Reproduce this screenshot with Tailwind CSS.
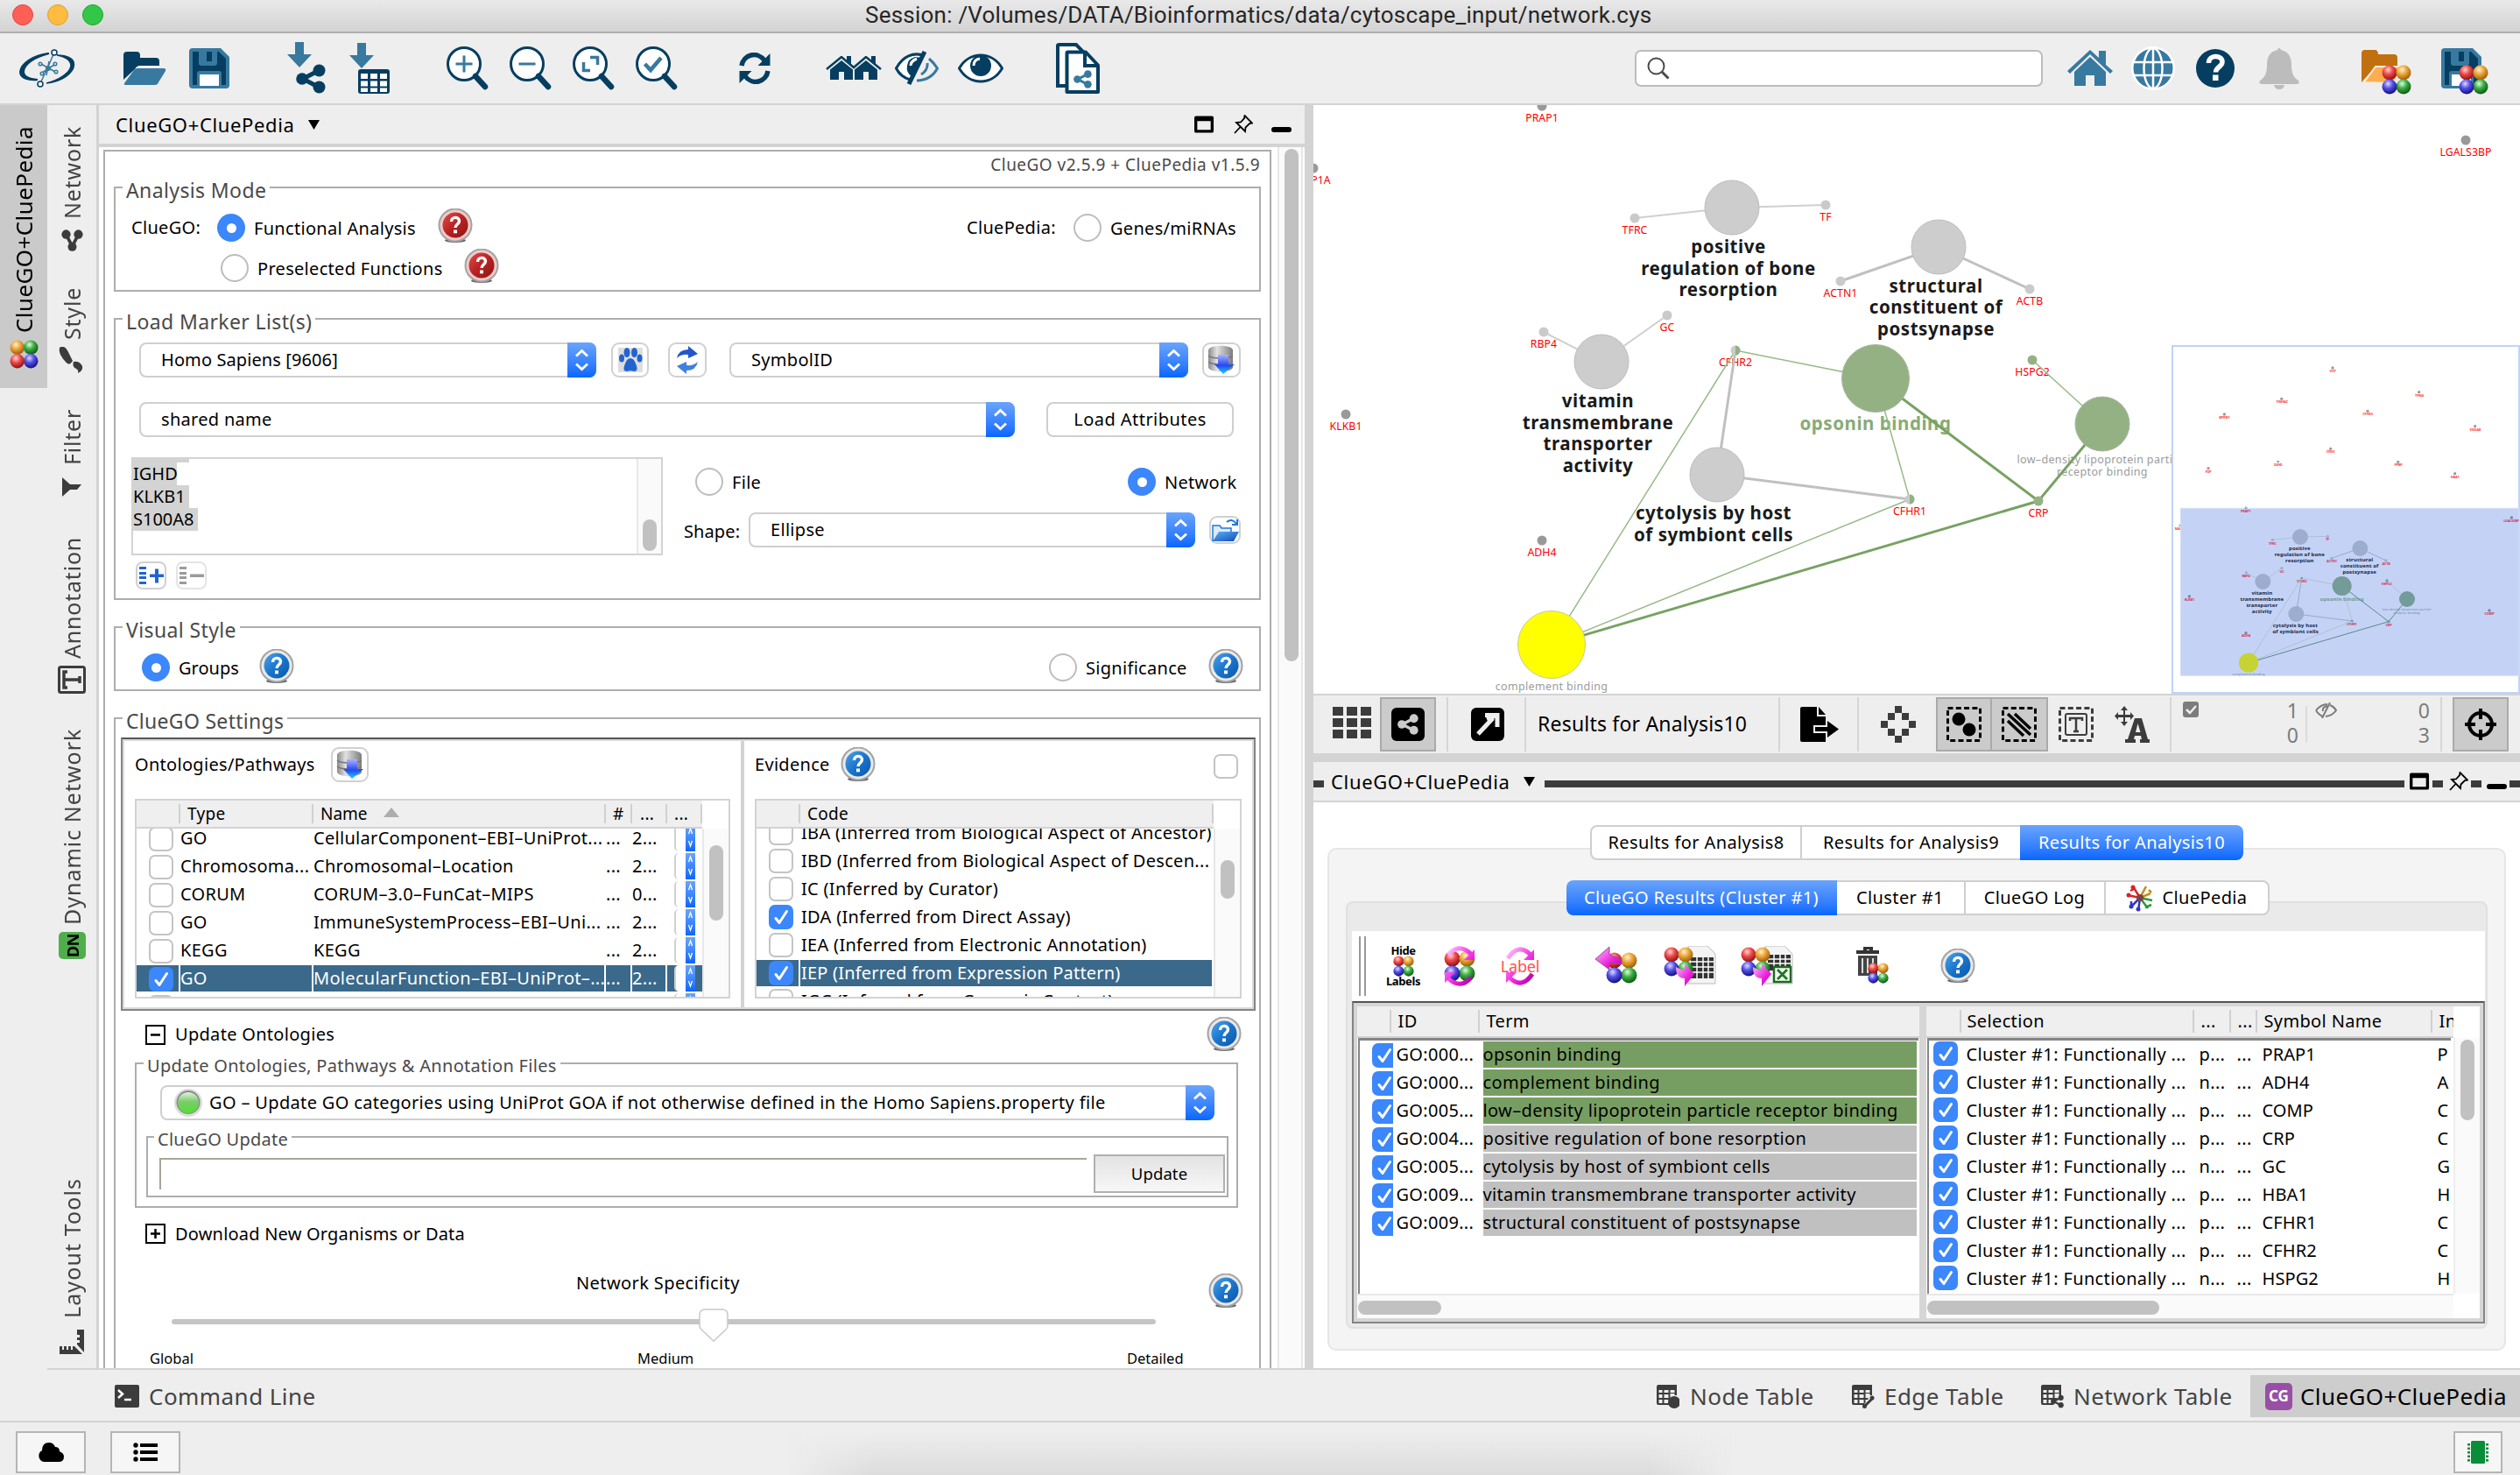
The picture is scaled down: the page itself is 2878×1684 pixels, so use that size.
<!DOCTYPE html>
<html lang="en">
<head>
<meta charset="utf-8">
<title>Session: network.cys</title>
<script src="https://cdn.jsdelivr.net/npm/@tailwindcss/browser@4"></script>
</head>
<body class="relative flex h-[1684px] w-[2878px] flex-col overflow-hidden whitespace-nowrap bg-[#eeeeee] font-['Noto_Sans',sans-serif] text-[20px] leading-[24px] tracking-[0.3px] text-black">

<!-- Shared icon symbols -->
<svg class="absolute size-0" aria-hidden="true">
  <defs>
    <radialGradient id="gR" cx=".4" cy=".3" r=".7"><stop offset="0" stop-color="#ffd5d0"/><stop offset=".45" stop-color="#ee4b4b"/><stop offset="1" stop-color="#8d1010"/></radialGradient>
    <radialGradient id="gO" cx=".4" cy=".3" r=".7"><stop offset="0" stop-color="#fff3d0"/><stop offset=".45" stop-color="#eda63a"/><stop offset="1" stop-color="#9a5c08"/></radialGradient>
    <radialGradient id="gB" cx=".4" cy=".3" r=".7"><stop offset="0" stop-color="#dcdcff"/><stop offset=".45" stop-color="#5550e8"/><stop offset="1" stop-color="#12107e"/></radialGradient>
    <radialGradient id="gG" cx=".4" cy=".3" r=".7"><stop offset="0" stop-color="#dcffdc"/><stop offset=".45" stop-color="#3fae45"/><stop offset="1" stop-color="#0a5a12"/></radialGradient>
    <linearGradient id="qR" x1="0" y1="0" x2="1" y2="1"><stop offset="0" stop-color="#dd4b4b"/><stop offset=".5" stop-color="#b92222"/><stop offset="1" stop-color="#8c1616"/></linearGradient>
    <linearGradient id="qB" x1="0" y1="0" x2="1" y2="1"><stop offset="0" stop-color="#4fa3e6"/><stop offset=".5" stop-color="#1a75cc"/><stop offset="1" stop-color="#0a57a8"/></linearGradient>
    <linearGradient id="gLed" x1="0" y1="0" x2="0" y2="1"><stop offset="0" stop-color="#dff3da"/><stop offset=".45" stop-color="#7ccc6c"/><stop offset="1" stop-color="#4fe02e"/></linearGradient>
    <linearGradient id="gDb" x1="0" y1="0" x2="1" y2="0"><stop offset="0" stop-color="#8a8a8a"/><stop offset=".35" stop-color="#e2e2e2"/><stop offset="1" stop-color="#7c7c7c"/></linearGradient>
    <linearGradient id="gArr" x1="0" y1="0" x2="0" y2="1"><stop offset="0" stop-color="#a9b4ff"/><stop offset=".55" stop-color="#2747f0"/><stop offset="1" stop-color="#17d2ff"/></linearGradient>
    <linearGradient id="gFold" x1="0" y1="0" x2="1" y2="1"><stop offset="0" stop-color="#5fb0f5"/><stop offset="1" stop-color="#0b4cb8"/></linearGradient>
    <linearGradient id="gMag" x1="0" y1="0" x2="1" y2="1"><stop offset="0" stop-color="#ffc4ff"/><stop offset=".6" stop-color="#ee22dd"/><stop offset="1" stop-color="#b000a8"/></linearGradient>
  </defs>
  <symbol id="balls" viewBox="0 0 32 32"><circle cx="8.5" cy="8.5" r="8" fill="url(#gR)"/><circle cx="23.5" cy="8.5" r="8" fill="url(#gO)"/><circle cx="23.5" cy="23.5" r="8" fill="url(#gG)"/><circle cx="8.5" cy="23.5" r="8" fill="url(#gB)"/></symbol>
  <symbol id="ballsv" viewBox="0 0 32 32"><circle cx="8.5" cy="8.5" r="8" fill="url(#gO)"/><circle cx="23.5" cy="8.5" r="8" fill="url(#gG)"/><circle cx="23.5" cy="23.5" r="8" fill="url(#gB)"/><circle cx="8.5" cy="23.5" r="8" fill="url(#gR)"/></symbol>
  <symbol id="helpR" viewBox="0 0 40 40"><ellipse cx="20" cy="36.5" rx="12" ry="2.5" fill="#666"/><circle cx="20" cy="19" r="18.5" fill="#f0c9c9" stroke="#a3a3a3" stroke-width="2"/><circle cx="20" cy="19" r="14.5" fill="url(#qR)"/><path d="M15.5 15c0-6 9-6 9-.7 0 3.700-4.500 3.700-4.500 7.700" fill="none" stroke="#fff" stroke-width="3.400"/><rect x="18" y="24.500" width="4" height="3.800" fill="#fff"/></symbol>
  <symbol id="helpB" viewBox="0 0 40 40"><ellipse cx="20" cy="36.500" rx="12" ry="2.500" fill="#666"/><circle cx="20" cy="19" r="18.500" fill="#e9e9e9" stroke="#a3a3a3" stroke-width="2"/><circle cx="20" cy="19" r="14.500" fill="url(#qB)"/><path d="M15.500 15c0-6 9-6 9-.7 0 3.700-4.500 3.700-4.500 7.700" fill="none" stroke="#fff" stroke-width="3.400"/><rect x="18" y="24.500" width="4" height="3.800" fill="#fff"/></symbol>
  <symbol id="updown" viewBox="0 0 33 40"><path d="M10 15.500 16.500 9.500 23 15.500M10 24.500 16.500 30.500 23 24.500" fill="none" stroke="#fff" stroke-width="2.800"/></symbol>
  <symbol id="db" viewBox="0 0 34 34"><path d="M2 6c0-7 28-7 28 0v19c0 7-28 7-28 0z" fill="url(#gDb)"/><path d="M2 12c4 4 24 4 28 0M2 19c4 4 24 4 28 0" fill="none" stroke="#777" stroke-width="1.500"/><path d="M13 11h12v11h7L19 33 9 22h4z" fill="url(#gArr)"/></symbol>
  <symbol id="check" viewBox="0 0 28 28"><path d="M8 15.500 12 20.500 20.500 7.500" fill="none" stroke="#fff" stroke-width="3" stroke-linecap="round" stroke-linejoin="round"/></symbol>
  <symbol id="maxi" viewBox="0 0 24 20"><path fill-rule="evenodd" d="M2 0h19q2 0 2 2v16q0 2-2 2H2q-2 0-2-2V2q0-2 2-2zM3.500 6v10.500h16V6z"/></symbol>
  <symbol id="pin" viewBox="0 0 22 22"><path d="M12.500 1 21 9.500 18 10 13.500 14.500 13 19 3 9 8 8.500 12 4zM7.500 14 1 21" fill="none" stroke="#000" stroke-width="1.800"/></symbol>
  <symbol id="mag" viewBox="0 0 48 50"><circle cx="20" cy="20" r="18.500" fill="#fff" stroke="#053e60" stroke-width="3"/><path d="M33 34 44 46" stroke="#053e60" stroke-width="6.500" stroke-linecap="round"/></symbol>
  <symbol id="share" viewBox="0 0 34 34"><circle cx="7" cy="17" r="6.800"/><circle cx="26.500" cy="7.500" r="7"/><circle cx="26.500" cy="26.500" r="7"/><path d="M26 7.500 8 17 26 26.500" fill="none" stroke="currentColor" stroke-width="5"/></symbol>
  <symbol id="tbl" viewBox="0 0 26 27"><path fill-rule="evenodd" d="M2 0h21v12h-2.500V10h-5v5h3v2h-3v4h-1v2H2q-2 0-2-2V2q0-2 2-2zM2.500 6v3h4V6zM8.500 6v3h5V6zM15.500 6v3h5V6zM2.500 11v4h4v-4zM8.500 11v4h5v-4zM2.500 17v4h4v-4zM8.500 17v4h5v-4z"/></symbol>
  <symbol id="down" viewBox="0 0 28 29"><path d="M9 0h10v14h9L14 29 0 14h9z" fill="#38799f"/></symbol>
  <symbol id="floppy" viewBox="0 0 46 46"><path d="M4 0h32l10 10v32q0 4-4 4H4q-4 0-4-4V4q0-4 4-4z" fill="#38799f"/><path d="M4 4h7v13q0 3 3 3h15q3 0 3-3V4h2l8 8v30H37V29q0-3-3-3H12q-3 0-3 3v13H4z" fill="#053e60"/><rect x="20" y="4" width="6" height="11" fill="#053e60"/><rect x="12" y="30" width="22" height="13" fill="#fff"/></symbol>
</svg>

<!-- Title bar -->
<header class="flex h-[38px] shrink-0 items-center border-b-2 border-[#b0b0b0] bg-linear-to-b from-[#e9e9e9] to-[#d3d3d3] pb-[3px]">
  <i class="ml-[14px] size-[24px] rounded-full border border-[#e2463f] bg-[#ff5f57]"></i>
  <i class="ml-[16px] size-[24px] rounded-full border border-[#e0a02e] bg-[#febc40]"></i>
  <i class="ml-[16px] size-[24px] rounded-full border border-[#1daa2e] bg-[#33c748]"></i>
  <span class="ml-[870px] font-['Roboto',sans-serif] text-[26px] tracking-[0.23px] text-[#262626]">Session: /Volumes/DATA/Bioinformatics/data/cytoscape_input/network.cys</span>
</header>

<!-- Main toolbar -->
<nav class="flex h-[82px] shrink-0 items-center border-b-2 border-[#d3d3d3]">
  <svg class="ml-[22px] h-[44px] w-[64px]" viewBox="0 0 64 44" fill="none"><path d="M34 5C15 7 2 17 1 26c0 7 9 10 20 9M34 5C18 9 5 17 5 26c0 5 6 8 16 9" fill="#053e60" fill-rule="evenodd" stroke="#053e60" stroke-width="2"/><path d="M43 7c12 0 20 4 19.500 11C62 28 48 37 31 39 46 35 58 27 59 19c0-7-6-10-16-12z" fill="#053e60" stroke="#053e60" stroke-width="1.500"/><path d="M39 6 33 20 25 37M25 17l16 9M34 14l-3 16M26 27l14-9" stroke="#38799f" stroke-width="1.500"/><g stroke="#053e60" stroke-width="1.500" fill="#fff"><circle cx="40" cy="4" r="3"/><circle cx="24" cy="40" r="3"/></g><g fill="#eee" stroke="#38799f" stroke-width="1.500"><circle cx="24" cy="17" r="1.800"/><circle cx="42" cy="26" r="1.800"/><circle cx="26" cy="28" r="1.800"/><circle cx="41" cy="17" r="1.800"/></g><circle cx="33" cy="22" r="3" fill="#38799f"/></svg>
  <svg class="ml-[54px] h-[38px] w-[50px]" viewBox="0 0 50 38"><path d="M1 32V4q0-4 4-4h11q4 0 4 4v3h18q4 0 4 4v5H20q-4 0-6 4z" fill="#053e60"/><path d="M2 36 13 21q1-2 4-2h30q3 0 2 3l-8 13q-1 3-4 3H4q-3 0-2-2z" fill="#38799f"/></svg>
  <svg class="ml-[26px] size-[46px]"><use href="#floppy"/></svg>
  <svg class="ml-[66px] h-[60px] w-[44px]" viewBox="0 0 44 60"><use href="#down" width="28" height="29"/><use href="#share" x="10" y="25" width="34" height="34" class="fill-[#053e60] text-[#053e60]"/></svg>
  <svg class="ml-[27px] h-[60px] w-[46px]" viewBox="0 0 46 60"><use href="#down" width="28" height="29" y="1"/><rect x="10" y="31" width="36" height="28" rx="3" fill="#053e60"/><path d="M13 36h8v6h-8zM24 36h8v6h-8zM35 36h8v6h-8zM13 44.500h8v6h-8zM24 44.500h8v6h-8zM35 44.500h8v6h-8zM13 52.500h8v4.500h-8zM24 52.500h8v4.500h-8zM35 52.500h8v4.500h-8z" fill="#fff"/></svg>
  <svg class="ml-[65px] h-[50px] w-[48px]"><use href="#mag"/><path d="M20 10.500v19M10.500 20h19" stroke="#38799f" stroke-width="3"/></svg>
  <svg class="ml-[24px] h-[50px] w-[48px]"><use href="#mag"/><path d="M10.500 20h19" stroke="#38799f" stroke-width="3"/></svg>
  <svg class="ml-[24px] h-[50px] w-[48px]"><use href="#mag"/><path d="M20 12.500h8.500V21M12.500 18v9.500H20" fill="none" stroke="#38799f" stroke-width="3.500"/></svg>
  <svg class="ml-[24px] h-[50px] w-[48px]"><use href="#mag"/><path d="M10.500 20 17 27 29 13" fill="none" stroke="#38799f" stroke-width="4.500"/></svg>
  <svg class="ml-[70px] h-[36px] w-[36px]" viewBox="0 0 36 36"><path d="M3 15C5 2 21-2 29 9M33 21C31 34 15 38 7 27" fill="none" stroke="#053e60" stroke-width="5.500"/><path d="M35.500 1v14h-14zM.5 35V21h14z" fill="#053e60"/></svg>
  <svg class="ml-[63px] h-[28px] w-[64px]" viewBox="0 0 64 28" fill="#053e60"><path d="M1 15 18 1 32 13 46 1 63 15" fill="none" stroke="#053e60" stroke-width="2.500"/><path d="M24 0h5v9l-5-4zM52 0h5v9l-5-4zM5 15.500 18 5 31 15.500V27H21v-9h-6v9H5zM33 15.500 46 5 59 15.500V27H49v-9h-6v9H33z"/></svg>
  <svg class="ml-[15px] h-[40px] w-[50px]" viewBox="0 0 50 40" fill="none"><path d="M1.500 20C9 6 24 3 33 6L18 34C10 32 5 27 1.500 20z" fill="#fff"/><path d="M34 5.500C21 1 9 6 1.500 20c3 6 9 11 16 13" stroke="#053e60" stroke-width="3"/><path d="M39 9q6 5 9.500 11C44 29 35 34 25 34M37 14q1 8-7 13" stroke="#38799f" stroke-width="3"/><path d="M31 8 19 29a12 12 0 0 1-5-12q1-8 9-10z" fill="#053e60"/><path d="M18 17q0-5 7-8" stroke="#fff" stroke-width="3"/><path d="M34 1 16 38" stroke="#053e60" stroke-width="5"/></svg>
  <svg class="ml-[22px] h-[34px] w-[52px]" viewBox="0 0 52 34" fill="none"><path d="M1.500 17C13-3 39-3 50.500 17 39 37 13 37 1.500 17z" fill="#fff" stroke="#053e60" stroke-width="3"/><circle cx="26" cy="14" r="12" fill="#053e60"/><path d="M18 14q0-7 7-8" stroke="#fff" stroke-width="3"/></svg>
  <svg class="ml-[60px] h-[58px] w-[50px]" viewBox="0 0 50 58" fill="none"><path d="M2 3q0-1 2-1h19l9 9v38H2z" fill="#fff" stroke="#053e60" stroke-width="4"/><path d="M12.500 11.500q0-1 1-1H34l14 15V56H12.500z" fill="#fff" stroke="#053e60" stroke-width="4" stroke-linejoin="round"/><path d="M33 10v16h15" stroke="#053e60" stroke-width="4"/><use href="#share" x="20" y="31" width="21" height="21" class="fill-[#38799f] text-[#38799f]"/></svg>
  <div class="ml-[611px] flex h-[42px] w-[466px] items-center rounded-[7px] border-2 border-[#bcbcbc] bg-white pl-[12px]">
    <svg class="size-[26px]" viewBox="0 0 26 26" fill="none" stroke="#4a4a4a"><circle cx="10.500" cy="10.500" r="9" stroke-width="2"/><path d="M17 17 24.500 24.500" stroke-width="3"/></svg>
  </div>
  <svg class="ml-[28px] h-[42px] w-[52px]" viewBox="0 0 52 42" fill="#38799f"><path d="M26 0 36 9V1h8v16l8 7-3 3L26 5 3 27 0 24z"/><path d="M26 8 44 25v16H31V29H21v12H8V25z"/></svg>
  <svg class="ml-[20px] size-[52px]" viewBox="0 0 52 52" fill="none"><circle cx="26" cy="26" r="25" fill="#fff"/><circle cx="26" cy="26" r="22.500" fill="#38799f"/><path d="M26 2v48M2 19h48M2 34h48" stroke="#fff" stroke-width="2.500"/><ellipse cx="26" cy="26" rx="10.500" ry="23" stroke="#fff" stroke-width="2.500"/></svg>
  <svg class="ml-[23px] size-[44px]" viewBox="0 0 44 44"><circle cx="22" cy="22" r="22" fill="#053e60"/><path d="M14.500 16c0-10 15.500-9.500 15.500-1.500 0 6-7.500 6-7.500 12" fill="none" stroke="#fff" stroke-width="5.500"/><rect x="19" y="29.500" width="6.500" height="6.500" fill="#fff"/></svg>
  <svg class="ml-[28px] h-[48px] w-[46px]" viewBox="0 0 46 48" fill="#bcbcbc"><path d="M21 3q2-5 4 0c9 2 12 8 12 18 0 9 3 14 8 17q2 4-3 4H4q-5 0-3-4c5-3 8-8 8-17C9 11 12 5 21 3z"/><path d="M17 43h12q-1 5-6 5t-6-5z"/></svg>
  <svg class="mt-[10px] ml-[71px] h-[54px] w-[60px]" viewBox="0 0 60 54"><path d="M0 38V5q0-4 4-4h11q4 0 4 5h18q4 0 4 4v10H16z" fill="#c1700f"/><path d="M3 38 16 20h32L36 39z" fill="#ffad50" stroke="#f6ead8" stroke-width="2"/><use href="#balls" x="23" y="18" width="34" height="34"/></svg>
  <svg class="mt-[8px] ml-[31px] h-[54px] w-[54px]" viewBox="0 0 54 54"><use href="#floppy" width="46" height="46"/><use href="#balls" x="20" y="19" width="34" height="34"/></svg>
</nav>

<!-- Work area -->
<div class="flex h-[1444px] shrink-0">

  <!-- Vertical tab strips -->
  <div class="w-[54px] shrink-0">
    <div class="flex h-[323px] flex-col items-center bg-[#cacaca] pt-[24px]">
      <span class="h-[236px] rotate-180 text-[26px] leading-[30px] tracking-[0.4px] [writing-mode:vertical-rl]">ClueGO+CluePedia</span>
      <svg class="mt-[8px] size-[33px]"><use href="#ballsv"/></svg>
    </div>
  </div>
  <div class="flex w-[56px] shrink-0 flex-col items-center border-b-2 border-[#d3d3d3] text-[25px] leading-[30px] tracking-[0.8px] text-[#444]">
    <span class="mt-[26px] h-[104px] rotate-180 [writing-mode:vertical-rl]">Network</span>
    <svg class="mt-[12px] size-[25px] -rotate-90 fill-[#3c3c3c] text-[#3c3c3c]"><use href="#share"/></svg>
    <span class="mt-[42px] h-[59px] rotate-180 [writing-mode:vertical-rl]">Style</span>
    <svg class="mt-[8px] size-[30px]" viewBox="0 0 30 30" fill="#3c3c3c"><path d="M2 0q5-2 9 6l5 10q-3 5-6 3C4 14-2 4 2 0zM17 17q7-1 10 5 1 5-5 8 1-4-2-5-5-2-3-8z"/></svg>
    <span class="mt-[41px] h-[64px] rotate-180 [writing-mode:vertical-rl]">Filter</span>
    <svg class="mt-[14px] size-[22px]" viewBox="0 0 22 22" fill="#3c3c3c"><path d="M0 0 9 8h13l-5 6H9L0 22z"/></svg>
    <span class="mt-[45px] h-[140px] rotate-180 [writing-mode:vertical-rl]">Annotation</span>
    <svg class="mt-[8px] size-[32px]" viewBox="0 0 32 32" fill="none" stroke="#3c3c3c"><rect x="1.500" y="1.500" width="29" height="29" rx="2" stroke-width="3"/><path d="M11 7H7v18h4M7 16h18M25 12v8" stroke-width="3.500"/></svg>
    <span class="mt-[39px] h-[225px] rotate-180 tracking-[1px] [writing-mode:vertical-rl]">Dynamic Network</span>
    <span class="mt-[8px] flex size-[31px] rotate-180 items-center justify-center rounded-[5px] bg-[#4fae4b] text-[18px] font-bold leading-[18px] tracking-[-0.5px] text-black [writing-mode:vertical-rl]">DN</span>
    <span class="mt-[250px] h-[160px] rotate-180 tracking-[1.1px] [writing-mode:vertical-rl]">Layout Tools</span>
    <svg class="mt-[13px] size-[28px]" viewBox="0 0 28 28" fill="#3c3c3c"><path d="M20 0h8v26L20 17v-2h3v-3h-3V9h3V6h-3zM0 28V19h3v4h2v-4h3v4h2v-4h3v4h2v-4h2l9 9z"/></svg>
  </div>

  <!-- Control panel -->
  <section class="flex w-[1380px] shrink-0 flex-col border-b-2 border-l-[3px] border-[#d3d3d3]">
    <div class="flex h-[48px] shrink-0 items-center border-b-4 border-[#d3d3d3] pl-[19px]">
      <span class="w-[220px] text-[22px] tracking-[0.65px]">ClueGO+CluePedia</span>
      <svg class="h-[11px] w-[13px]" viewBox="0 0 13 11"><path d="M0 0h13L6.500 11z"/></svg>
      <svg class="ml-[999px] h-[20px] w-[23px]"><use href="#maxi"/></svg>
      <svg class="ml-[22px] size-[22px]"><use href="#pin"/></svg>
      <i class="mt-[11px] ml-[21px] h-[6px] w-[23px] rounded-[3px] bg-black"></i>
    </div>
    <div class="flex h-[1394px] overflow-hidden bg-white pl-[5px]">
      <div class="mt-[3px] w-[1334px] shrink-0 border-2 border-b-0 border-[#adadad]">
        <p class="h-[27px] pt-[2px] pr-[11px] text-right text-[19px] leading-[27px] tracking-[0.48px] text-[#4a4a4a]">ClueGO v2.5.9 + CluePedia v1.5.9</p>

        <!-- Analysis mode -->
        <fieldset class="ml-[10px] h-[133px] w-[1310px] border-2 border-[#adadad]">
          <legend class="ml-[8px] h-[28px] px-[4px] pt-[3px] text-[23px] leading-[28px] tracking-[0.38px] text-[#4a4a4a]">Analysis Mode</legend>
          <div class="flex h-[56px] items-center pt-[8px] pl-[18px]">
            <span class="w-[98px]">ClueGO:</span>
            <i class="flex size-[32px] items-center justify-center rounded-full bg-[#3b87fb]"><i class="size-[11px] rounded-full bg-white"></i></i>
            <span class="ml-[10px] w-[210px] pt-[2px]">Functional Analysis</span>
            <svg class="mb-[4px] size-[40px]"><use href="#helpR"/></svg>
            <span class="ml-[564px] w-[122px]">CluePedia:</span>
            <i class="size-[32px] rounded-full border-2 border-[#bdbdbd] bg-white"></i>
            <span class="ml-[10px] pt-[2px]">Genes/miRNAs</span>
          </div>
          <div class="flex h-[44px] items-center pl-[120px]">
            <i class="size-[32px] rounded-full border-2 border-[#bdbdbd] bg-white"></i>
            <span class="ml-[10px] w-[236px] pt-[2px]">Preselected Functions</span>
            <svg class="mb-[4px] size-[40px]"><use href="#helpR"/></svg>
          </div>
        </fieldset>

        <!-- Marker lists -->
        <fieldset class="mt-[17px] ml-[10px] h-[335px] w-[1310px] border-2 border-[#adadad]">
          <legend class="ml-[8px] h-[28px] px-[4px] pt-[3px] text-[23px] leading-[28px] tracking-[0.38px] text-[#4a4a4a]">Load Marker List(s)</legend>
          <div class="mt-[13px] flex h-[40px] items-center pl-[27px]">
            <div class="flex h-[40px] w-[522px] items-center justify-between rounded-[8px] border-2 border-[#cfcfcf] bg-white pl-[23px]"><span class="tracking-[0.1px]">Homo Sapiens [9606]</span><svg class="-mr-[2px] h-[40px] w-[33px] rounded-r-[8px] bg-linear-to-b from-[#6aa4fb] to-[#0366fe]"><use href="#updown"/></svg></div>
            <button class="ml-[17px] flex h-[40px] w-[43px] items-center justify-center rounded-[9px] border-2 border-[#d0d0d0] bg-white"><svg class="size-[28px] bg-[#dedede]" viewBox="0 0 28 28" fill="#2264cf"><ellipse cx="4" cy="12" rx="3" ry="4.500"/><ellipse cx="10" cy="5.500" rx="3.500" ry="5.500"/><ellipse cx="18.500" cy="5.500" rx="3.500" ry="5.500"/><ellipse cx="24.500" cy="12" rx="3" ry="4.500"/><path d="M14 12q4 0 6 6 4 9-2 9-4-1.500-8 0-6 0-2-9 2-6 6-6z"/></svg></button>
            <button class="ml-[22px] flex h-[40px] w-[44px] items-center justify-center rounded-[9px] border-2 border-[#d0d0d0] bg-white"><svg class="h-[32px] w-[26px]" viewBox="0 0 26 32"><path d="M1 14Q3 4 14 4V0l11 9-11 5v-4Q6 9 1 14z" fill="#2357c8"/><path d="M25 18q-2 10-13 10v4L1 23l11-5v4q8 1 13-4z" fill="#3f80e0"/></svg></button>
            <div class="ml-[26px] flex h-[40px] w-[524px] items-center justify-between rounded-[8px] border-2 border-[#cfcfcf] bg-white pl-[23px]"><span>SymbolID</span><svg class="-mr-[2px] h-[40px] w-[33px] rounded-r-[8px] bg-linear-to-b from-[#6aa4fb] to-[#0366fe]"><use href="#updown"/></svg></div>
            <button class="ml-[16px] flex h-[40px] w-[44px] items-center justify-center rounded-[9px] border-2 border-[#d0d0d0] bg-white"><svg class="size-[34px]"><use href="#db"/></svg></button>
          </div>
          <div class="mt-[28px] flex h-[40px] items-center pl-[27px]">
            <div class="flex h-[40px] w-[1000px] items-center justify-between rounded-[8px] border-2 border-[#cfcfcf] bg-white pl-[23px]"><span>shared name</span><svg class="-mr-[2px] h-[40px] w-[33px] rounded-r-[8px] bg-linear-to-b from-[#6aa4fb] to-[#0366fe]"><use href="#updown"/></svg></div>
            <button class="ml-[36px] h-[40px] w-[214px] rounded-[8px] border-2 border-[#cfcfcf] bg-white tracking-[0.45px]">Load Attributes</button>
          </div>
          <div class="mt-[23px] flex pl-[18px]">
            <div class="flex h-[112px] w-[607px] justify-between border-2 border-[#d3d3d3]">
              <div class="-mt-[2px] -ml-[2px] flex flex-col items-start tracking-[0px]">
                <i class="h-[6px] w-[66px] bg-[#d3d3d3]"></i>
                <span class="h-[26px] w-[52px] bg-[#d3d3d3] pl-[2px] leading-[26px]">IGHD</span>
                <span class="h-[26px] w-[66px] bg-[#d3d3d3] pl-[2px] leading-[26px]">KLKB1</span>
                <span class="h-[26px] w-[76px] bg-[#d3d3d3] pl-[2px] leading-[26px]">S100A8</span>
              </div>
              <div class="flex w-[28px] flex-col items-center justify-end border-l-2 border-[#e8e8e8] bg-[#fafafa] pb-[3px]"><i class="h-[36px] w-[16px] rounded-full bg-[#c1c1c1]"></i></div>
            </div>
            <div class="ml-[24px] pt-[12px]">
              <div class="flex h-[32px] items-center pl-[13px]">
                <i class="size-[32px] rounded-full border-2 border-[#bdbdbd] bg-white"></i>
                <span class="ml-[10px] w-[452px] pt-[2px]">File</span>
                <i class="flex size-[32px] items-center justify-center rounded-full bg-[#3b87fb]"><i class="size-[11px] rounded-full bg-white"></i></i>
                <span class="ml-[10px] pt-[2px]">Network</span>
              </div>
              <div class="mt-[19px] flex h-[40px] items-center">
                <span class="w-[74px] pt-[3px] tracking-[0.1px]">Shape:</span>
                <div class="flex h-[40px] w-[510px] items-center justify-between rounded-[8px] border-2 border-[#cfcfcf] bg-white pl-[23px]"><span>Ellipse</span><svg class="-mr-[2px] h-[40px] w-[33px] rounded-r-[8px] bg-linear-to-b from-[#6aa4fb] to-[#0366fe]"><use href="#updown"/></svg></div>
                <button class="ml-[16px] flex h-[32px] w-[36px] items-center justify-center rounded-[9px] border-2 border-[#d0d0d0] bg-white"><svg class="h-[27px] w-[31px]" viewBox="0 0 31 27"><path d="M1 26V8h8l2 3h11v5" fill="#dfe9f7" stroke="#1d78e0" stroke-width="1.500"/><path d="M1 26 8 15h23l-6 11z" fill="url(#gFold)"/><path d="M17 4q6-5 11 2M29 1v6h-6" fill="none" stroke="#1d78e0" stroke-width="2"/></svg></button>
              </div>
            </div>
          </div>
          <div class="mt-[7px] flex pl-[23px]">
            <button class="flex h-[32px] w-[35px] items-center justify-center rounded-[8px] border-2 border-[#d0d0d0] bg-white"><svg class="h-[20px] w-[28px]" viewBox="0 0 28 20" fill="#2264cf"><path d="M0 0h8v3H0zM0 6h8v3H0zM0 11h8v3H0zM0 17h8v3H0zM12 8.500h16v3.500H12zM18 2.500h4v16h-4z"/></svg></button>
            <button class="ml-[11px] flex h-[32px] w-[35px] items-center justify-center rounded-[8px] border-2 border-[#e4e4e4] bg-white"><svg class="h-[20px] w-[28px]" viewBox="0 0 28 20" fill="#9a9a9a"><path d="M0 0h8v3H0zM0 6h8v3H0zM0 11h8v3H0zM0 17h8v3H0zM12 8.500h16v3.500H12z"/></svg></button>
          </div>
        </fieldset>

        <!-- Visual style -->
        <fieldset class="mt-[17px] ml-[10px] h-[87px] w-[1310px] border-2 border-[#adadad]">
          <legend class="ml-[8px] h-[28px] px-[4px] pt-[3px] text-[23px] leading-[28px] tracking-[0.38px] text-[#4a4a4a]">Visual Style</legend>
          <div class="mt-[12px] flex h-[40px] items-center pl-[30px]">
            <i class="flex size-[32px] items-center justify-center rounded-full bg-[#3b87fb]"><i class="size-[11px] rounded-full bg-white"></i></i>
            <span class="ml-[10px] w-[92px] pt-[2px] tracking-[0px]">Groups</span>
            <svg class="mb-[3px] size-[40px]"><use href="#helpB"/></svg>
            <i class="ml-[862px] size-[32px] rounded-full border-2 border-[#bdbdbd] bg-white"></i>
            <span class="ml-[10px] w-[140px] pt-[2px]">Significance</span>
            <svg class="mb-[3px] size-[40px]"><use href="#helpB"/></svg>
          </div>
        </fieldset>

        <!-- ClueGO settings -->
        <fieldset class="mt-[17px] ml-[10px] h-[800px] w-[1310px] border-2 border-[#adadad]">
          <legend class="ml-[8px] h-[28px] px-[4px] pt-[3px] text-[23px] leading-[28px] tracking-[0.3px] text-[#4a4a4a]">ClueGO Settings</legend>
          <div class="mt-[8px] ml-[6px] h-[312px] w-[1296px] border-2 border-[#858585] border-t-[#555]">
            <div class="flex h-full border-2 border-[#dadada]">
              <div class="w-[704px] shrink-0 pl-[12px]">
                <div class="mt-[7px] flex h-[40px] items-center">
                  <span class="w-[224px]">Ontologies/Pathways</span>
                  <button class="flex h-[40px] w-[43px] items-center justify-center rounded-[9px] border-2 border-[#d0d0d0] bg-white"><svg class="size-[34px]"><use href="#db"/></svg></button>
                </div>
                <div class="mt-[19px] flex h-[228px] w-[680px] border-2 border-[#d3d3d3]">
                  <div class="w-[646px] shrink-0">
                    <div class="grid h-[32px] grid-cols-[50px_152px_334px_30px_40px_40px] items-center border-b-2 border-[#d3d3d3] bg-[#efefef] text-[19px]">
                      <span class="h-[22px] border-r-2 border-[#d0d0d0]"></span>
                      <span class="h-[22px] border-r-2 border-[#d0d0d0] pl-[8px] leading-[22px]">Type</span>
                      <span class="flex h-[22px] items-center border-r-2 border-[#d0d0d0] pl-[8px] leading-[22px] tracking-[0px]">Name<svg class="mb-[3px] ml-[18px] h-[11px] w-[18px]" viewBox="0 0 18 11"><path d="M9 0 18 11H0z" fill="#adadad"/></svg></span>
                      <span class="h-[22px] border-r-2 border-[#d0d0d0] pl-[8px] leading-[22px]">#</span>
                      <span class="h-[22px] border-r-2 border-[#d0d0d0] pl-[9px] leading-[22px]">...</span>
                      <span class="h-[22px] border-r-2 border-[#d0d0d0] pl-[8px] leading-[22px]">...</span>
                    </div>
                    <div id="ontologies" class="h-[192px] overflow-hidden"></div>
                  </div>
                  <div class="mt-[32px] w-[30px] border-l-2 border-[#e8e8e8] bg-[#fafafa] pt-[19px] pl-[6px]"><i class="block h-[86px] w-[16px] rounded-full bg-[#c1c1c1]"></i></div>
                </div>
              </div>
              <div class="grow border-l-4 border-[#d3d3d3] pl-[12px]">
                <div class="mt-[7px] flex h-[40px] items-center">
                  <span class="w-[98px]">Evidence</span>
                  <svg class="size-[40px]"><use href="#helpB"/></svg>
                  <i class="mt-[3px] ml-[386px] size-[28px] rounded-[7px] border-2 border-[#c4c4c4] bg-white"></i>
                </div>
                <div class="mt-[19px] flex h-[228px] w-[556px] border-2 border-[#d3d3d3]">
                  <div class="w-[522px] shrink-0">
                    <div class="grid h-[32px] grid-cols-[50px_472px] items-center border-b-2 border-[#d3d3d3] bg-[#efefef] text-[19px]">
                      <span class="h-[22px] border-r-2 border-[#d0d0d0]"></span>
                      <span class="h-[22px] border-r-2 border-[#d0d0d0] pl-[8px] leading-[22px]">Code</span>
                    </div>
                    <div id="evidence" class="h-[192px] overflow-hidden"></div>
                  </div>
                  <div class="mt-[32px] w-[30px] border-l-2 border-[#e8e8e8] bg-[#fafafa] pt-[36px] pl-[6px]"><i class="block h-[44px] w-[16px] rounded-full bg-[#c1c1c1]"></i></div>
                </div>
              </div>
            </div>
          </div>

          <div class="flex h-[48px] items-center pt-[6px] pl-[34px]">
            <svg class="size-[23px]" viewBox="0 0 23 23"><path d="M1 1h21v21H1z" fill="none" stroke="#000" stroke-width="2"/><path d="M6 11.500h11" stroke="#000" stroke-width="2.500"/></svg>
            <span class="ml-[11px] w-[1178px] tracking-[0.3px]">Update Ontologies</span>
            <svg class="size-[40px] shrink-0"><use href="#helpB"/></svg>
          </div>
          <fieldset class="ml-[22px] h-[177px] w-[1260px] border-2 border-[#adadad]">
            <legend class="ml-[8px] h-[24px] px-[4px] pt-[3px] tracking-[0.3px] text-[#4a4a4a]">Update Ontologies, Pathways &amp; Annotation Files</legend>
            <div class="mt-[13px] ml-[27px] flex h-[40px] w-[1204px] items-center rounded-[8px] border-2 border-[#cfcfcf] bg-white pl-[13px]">
              <svg class="size-[34px]" viewBox="0 0 34 34"><circle cx="17" cy="17" r="16" fill="#dcdcdc"/><circle cx="17" cy="16.500" r="13.500" fill="#8b8b8b"/><circle cx="17" cy="17" r="12" fill="url(#gLed)"/></svg>
              <span class="ml-[7px] grow tracking-[0.34px]">GO – Update GO categories using UniProt GOA if not otherwise defined in the Homo Sapiens.property file</span>
              <svg class="-mr-[2px] h-[40px] w-[33px] rounded-r-[8px] bg-linear-to-b from-[#6aa4fb] to-[#0366fe]"><use href="#updown"/></svg>
            </div>
            <fieldset class="mt-[7px] ml-[11px] h-[81px] w-[1236px] border-2 border-[#adadad]">
              <legend class="ml-[7px] h-[24px] px-[4px] pt-[3px] tracking-[0.25px] text-[#4a4a4a]">ClueGO Update</legend>
              <div class="mt-[8px] flex pl-[13px]">
                <div class="mt-[4px] h-[36px] w-[1059px] border-t-2 border-l-2 border-[#a8a698]"></div>
                <button class="ml-[8px] h-[44px] w-[150px] border-2 border-[#b0b0b0] bg-linear-to-b from-[#e3e3e3] to-[#f7f7f7] text-[18.5px] tracking-[0.1px]">Update</button>
              </div>
            </fieldset>
          </fieldset>
          <div class="mt-[18px] flex h-[23px] items-center pl-[34px]">
            <svg class="size-[23px]" viewBox="0 0 23 23"><path d="M1 1h21v21H1z" fill="none" stroke="#000" stroke-width="2"/><path d="M6 11.500h11M11.500 6v11" stroke="#000" stroke-width="2.500"/></svg>
            <span class="ml-[11px] tracking-[0.2px]">Download New Organisms or Data</span>
          </div>
          <div class="mt-[33px] flex h-[41px] items-start pl-[526px]">
            <span class="w-[722px] tracking-[0.4px]">Network Specificity</span>
            <svg class="mt-[1px] size-[40px]"><use href="#helpB"/></svg>
          </div>
          <div class="relative h-[38px] pt-[12px] pl-[64px]">
            <div class="h-[6px] w-[1124px] rounded-full bg-[#c5c5c5]"></div>
            <svg class="absolute top-0 left-[666px] h-[38px] w-[34px]" viewBox="0 0 34 38"><path d="M7 1h20q6 0 6 6v13q0 2-2 4L17 37 3 24q-2-2-2-4V7q0-6 6-6z" fill="#fff" stroke="#c9c9c9" stroke-width="1.500"/></svg>
          </div>
          <div class="mt-[9px] flex h-[20px] pl-[39px] text-[16.5px] leading-[20px] tracking-[0px]">
            <span class="w-[557px]">Global</span><span class="w-[559px]">Medium</span><span>Detailed</span>
          </div>
        </fieldset>
      </div>
      <div class="ml-[7px] w-[29px] border-x-2 border-[#e8e8e8] bg-[#fafafa] pt-[2px] pl-[6px]"><i class="block h-[585px] w-[16px] rounded-full bg-[#c1c1c1]"></i></div>
    </div>
  </section>
  <div class="w-[10px] shrink-0 bg-[#d3d3d3]"></div>

  <!-- Right side -->
  <section class="flex w-[1378px] shrink-0 flex-col overflow-hidden">
    <!-- Network canvas -->
    <div class="relative h-[674px] shrink-0 overflow-hidden border-b-2 border-[#d3d3d3] bg-white">
      <svg class="block h-[672px] w-[1378px]" viewBox="1500 120 1378 672">
        <g class="fill-[#fe0000] text-[12.3px] tracking-[0.05px]" text-anchor="middle">
          <text x="1761" y="139">PRAP1</text><text x="2816" y="178">LGALS3BP</text><text x="1499" y="210" class="tracking-[0px]">MAP1A</text><text x="2085" y="252">TF</text><text x="1867" y="267">TFRC</text><text x="2102" y="339">ACTN1</text><text x="2318" y="348">ACTB</text><text x="1904" y="378">GC</text><text x="1763" y="397">RBP4</text><text x="1982" y="418">CFHR2</text><text x="2321" y="429">HSPG2</text><text x="1537" y="491">KLKB1</text><text x="2181" y="588">CFHR1</text><text x="2328" y="590">CRP</text><text x="1761" y="635">ADH4</text>
        </g>
        <g class="fill-[#1a1a1a] text-[20.5px] font-bold tracking-[0.55px]" text-anchor="middle">
          <text x="1974" y="289">positive</text><text x="1974" y="314">regulation of bone</text><text x="1974" y="338">resorption</text>
          <text x="2211" y="334">structural</text><text x="2211" y="358">constituent of</text><text x="2211" y="383">postsynapse</text>
          <text x="1825" y="465">vitamin</text><text x="1825" y="490">transmembrane</text><text x="1825" y="514">transporter</text><text x="1825" y="539">activity</text>
          <text x="1957" y="593">cytolysis by host</text><text x="1957" y="618">of symbiont cells</text>
          <text x="2142" y="491" class="fill-[#87ab75]">opsonin binding</text>
        </g>
        <g class="fill-[#9b9b9b] text-[12.5px] tracking-[0.35px]" text-anchor="middle">
          <text x="1772" y="788">complement binding</text><text x="2401" y="529">low–density lipoprotein particle</text><text x="2401" y="543">receptor binding</text>
        </g>
        <g stroke="#cfcfcf" stroke-width="2"><path d="M1867 249 1978 237 2085 234M1763 379 1829 413 1904 360" fill="none"/></g>
        <g stroke="#c0c0c0" stroke-width="3"><path d="M2102 321 2214 282 2318 330M1982 400 1961 542 2181 570" fill="none"/></g>
        <g stroke="#97ba86" stroke-width="1.500"><path d="M1982 400 2142 432 2181 570 1772 736 1982 400M2321 411 2401 484" fill="none"/></g>
        <g stroke="#77a263" stroke-width="3"><path d="M2142 432 2328 572 2401 484M2328 572 1772 736" fill="none"/></g>
        <g fill="#cdcdcd" stroke="#bdbdbd"><circle cx="1978" cy="237" r="31"/><circle cx="2214" cy="282" r="31"/><circle cx="1829" cy="413" r="31"/><circle cx="1961" cy="542" r="31"/></g>
        <g fill="#94b184" stroke="#a9b5a2"><circle cx="2142" cy="432" r="38.500"/><circle cx="2401" cy="484" r="31"/></g>
        <circle cx="1772" cy="736" r="38.500" fill="#ff0" stroke="#c8c8a0"/>
        <g fill="#cacaca"><circle cx="2085" cy="234" r="5.500"/><circle cx="1867" cy="249" r="5.500"/><circle cx="2102" cy="321" r="5.500"/><circle cx="2318" cy="330" r="5.500"/><circle cx="1904" cy="360" r="5.500"/><circle cx="1763" cy="379" r="5.500"/><circle cx="1982" cy="400" r="5.500"/><circle cx="2181" cy="570" r="5.500"/></g>
        <g fill="#94b184"><path d="M1982 394.500a5.500 5.500 0 0 1 0 11zM2181 564.500a5.500 5.500 0 0 1 0 11z"/><circle cx="2321" cy="411" r="5.500"/><circle cx="2328" cy="572" r="5.500"/></g>
        <g fill="#999"><circle cx="1761" cy="121" r="5.500"/><circle cx="2816" cy="160" r="5.500"/><circle cx="1500" cy="192" r="5.500"/><circle cx="1537" cy="473" r="5.500"/><circle cx="1761" cy="617" r="5.500"/></g>
      </svg>
      <!-- Bird's-eye overview -->
      <svg class="absolute right-0 bottom-0 h-[398px] w-[398px]" viewBox="120 42 1194 1194">
        <rect x="123" y="45" width="1188" height="1188" fill="#fff" stroke="#c2d2f8" stroke-width="6"/>
        <g class="fill-[#ff3b3b] text-[12px] font-bold tracking-[-0.8px]" text-anchor="middle">
          <text x="672" y="135">VCP</text><text x="969" y="219">TPM4</text><text x="498" y="240">YWHAZ</text><text x="792" y="282">CFHR3</text><text x="301" y="294">BPIFB1</text><text x="1160" y="335">S100A8</text><text x="665" y="411">ITIH3</text><text x="485" y="456">IGHD</text><text x="897" y="456">PPBP</text><text x="246" y="479">PZP</text><text x="1091" y="498">HBA1</text><text x="150" y="675">MAP1A</text>
        </g>
        <g fill="#999"><circle cx="672" cy="120" r="5"/><circle cx="968" cy="203" r="5"/><circle cx="497" cy="226" r="5"/><circle cx="792" cy="268" r="5"/><circle cx="301" cy="279" r="5"/><circle cx="1160" cy="320" r="5"/><circle cx="665" cy="397" r="5"/><path d="M480 438h10l-4 8h-2z"/><circle cx="896" cy="442" r="5"/><circle cx="246" cy="464" r="5"/><circle cx="1091" cy="482" r="5"/><circle cx="149" cy="660" r="4"/></g>
        <rect x="151" y="601" width="1160" height="573" fill="#c4d3f5" stroke="#d4dff9" stroke-width="3"/>
        <g class="fill-[#d23560] text-[12px] font-bold tracking-[-0.8px]" text-anchor="middle">
          <text x="374" y="615">PRAP1</text><text x="1284" y="648">LGALS3BP</text><text x="466" y="726">TFRC</text><text x="654" y="710">TF</text><text x="669" y="786">ACTN1</text><text x="855" y="795">ACTB</text><text x="375" y="837">RBP4</text><text x="498" y="822">GC</text><text x="566" y="855">CFHR2</text><text x="857" y="864">HSPG2</text><text x="181" y="918">KLKB1</text><text x="1209" y="966">COMP</text><text x="737" y="1002">CFHR1</text><text x="864" y="1005">CRP</text><text x="375" y="1041">ADH4</text>
        </g>
        <g class="fill-[#17233f] text-[18px] font-bold tracking-[0.3px]" text-anchor="middle">
          <text x="559" y="744">positive</text><text x="559" y="765">regulation of bone</text><text x="559" y="785">resorption</text>
          <text x="764" y="782">structural</text><text x="764" y="803">constituent of</text><text x="764" y="824">postsynapse</text>
          <text x="430" y="897">vitamin</text><text x="430" y="918">transmembrane</text><text x="430" y="939">transporter</text><text x="430" y="959">activity</text>
          <text x="544" y="1007">cytolysis by host</text><text x="545" y="1028">of symbiont cells</text>
          <text x="704" y="918" class="fill-[#6f9a97]">opsonin binding</text>
        </g>
        <g class="fill-[#7283ab] text-[11px] tracking-[0.2px]" text-anchor="middle"><text x="926" y="951">low–density lipoprotein particle</text><text x="926" y="963">receptor binding</text><text x="384" y="1173">complement binding</text></g>
        <path d="M466 709 561 699 655 697M376 822 433 852 498 806M566 840 704 867 739 987 384 1130 566 840M858 849 927 912" fill="none" stroke="#a3b5c8" stroke-width="2"/>
        <path d="M669 772 766 738 855 780M566 840 547 963 739 987" fill="none" stroke="#99a9cb" stroke-width="3"/>
        <path d="M704 867 864 989 927 912M864 989 384 1130" fill="none" stroke="#5c8a86" stroke-width="3"/>
        <g fill="#9dadcf"><circle cx="561" cy="699" r="27"/><circle cx="766" cy="738" r="27"/><circle cx="433" cy="852" r="27"/><circle cx="547" cy="963" r="27"/><circle cx="466" cy="709" r="5"/><circle cx="655" cy="697" r="5"/><circle cx="669" cy="772" r="5"/><circle cx="855" cy="780" r="5"/><circle cx="376" cy="822" r="5"/><circle cx="498" cy="806" r="5"/><circle cx="375" cy="600" r="5"/></g>
        <g fill="#739b98"><circle cx="704" cy="867" r="33"/><circle cx="927" cy="912" r="27"/><circle cx="566" cy="840" r="4"/><circle cx="858" cy="849" r="5"/><circle cx="739" cy="987" r="4"/><circle cx="864" cy="989" r="5"/></g>
        <g fill="#7284a9"><circle cx="1285" cy="633" r="5"/><circle cx="181" cy="903" r="5"/><circle cx="1209" cy="951" r="5"/><circle cx="375" cy="1028" r="5"/></g>
        <circle cx="384" cy="1130" r="33.500" fill="#c5d432"/>
      </svg>
    </div>

    <!-- Network view toolbar -->
    <div class="flex h-[66px] shrink-0 items-center">
      <svg class="mb-[4px] ml-[22px] h-[36px] w-[44px]" viewBox="0 0 44 36" fill="#3c3c3c"><path d="M0 0h12v10H0zM16 0h12v10H16zM32 0h12v10H32zM0 13h12v10H0zM16 13h12v10H16zM32 13h12v10H32zM0 26h12v10H0zM16 26h12v10H16zM32 26h12v10H32z"/></svg>
      <span class="ml-[10px] flex h-[62px] w-[64px] items-center justify-center border-2 border-[#aaa] bg-[#cbcbcb]"><svg class="size-[38px]" viewBox="0 0 38 38"><rect width="38" height="38" rx="6"/><use href="#share" x="7" y="7" width="24" height="24" class="fill-[#cbcbcb] text-[#cbcbcb]"/></svg></span>
      <i class="ml-[12px] h-[62px] w-[2px] bg-[#d6d6d6]"></i>
      <svg class="ml-[26px] size-[38px]" viewBox="0 0 38 38"><rect width="38" height="38" rx="6"/><path d="M8 30 25 12M16 8.500h14V22M30 8.500 18 13z" fill="none" stroke="#eee" stroke-width="5"/></svg>
      <i class="ml-[23px] h-[62px] w-[2px] bg-[#d6d6d6]"></i>
      <span class="ml-[13px] w-[275px] pb-[2px] text-[23px] tracking-[0.2px]">Results for Analysis10</span>
      <i class="h-[62px] w-[2px] bg-[#d6d6d6]"></i>
      <svg class="ml-[23px] h-[40px] w-[44px]" viewBox="0 0 44 40"><path d="M0 2q0-2 2-2h17v11h10v10H15v9h14v10H2q-2 0-2-2zM21 0l8 9h-8z"/><path d="M17 23h14v-7l13 9.500L31 35v-7H17z"/></svg>
      <i class="ml-[21px] h-[62px] w-[2px] bg-[#d6d6d6]"></i>
      <svg class="ml-[25px] h-[42px] w-[40px]" viewBox="0 0 40 42" fill="#3c3c3c"><path d="M16 0h8v8h-8zM8 8h8v8H8zM24 8h8v8h-8zM0 17h8v8H0zM32 17h8v8h-8zM8 26h8v8H8zM24 26h8v8h-8zM16 34h8v8h-8z"/></svg>
      <span class="ml-[23px] flex h-[62px] w-[64px] items-center justify-center border-2 border-[#aaa] bg-[#cbcbcb]"><svg class="size-[40px]" viewBox="0 0 40 40"><rect x="1.500" y="1.500" width="37" height="37" fill="none" stroke="#000" stroke-width="3" stroke-dasharray="6 3.300"/><circle cx="14" cy="14" r="7.500"/><circle cx="26" cy="26" r="7.500"/></svg></span>
      <span class="flex h-[62px] w-[64px] items-center justify-center border-2 border-l-0 border-[#aaa] bg-[#cbcbcb]"><svg class="size-[40px]" viewBox="0 0 40 40"><rect x="1.500" y="1.500" width="37" height="37" fill="none" stroke="#000" stroke-width="3" stroke-dasharray="6 3.300"/><path d="M7 16 25 33M7 8 33 32M15 8 33 25" stroke="#000" stroke-width="3.500"/></svg></span>
      <svg class="ml-[12px] size-[40px]" viewBox="0 0 40 40" fill="none" stroke="#3c3c3c"><rect x="1.500" y="1.500" width="37" height="37" stroke-width="3" stroke-dasharray="6 3.300"/><rect x="8" y="8" width="24" height="24" rx="2" stroke-width="2"/><path d="M13 16v-3h14v3M20 13v15M17 28h6" stroke-width="2.500"/></svg>
      <svg class="ml-[24px] h-[42px] w-[40px]" viewBox="0 0 40 42" fill="#3c3c3c"><path d="M11 0l4 5h-3v5h6V7l4 4.500-4 4.500v-3h-6v5h3l-4 5-4-5h3v-5H4v3l-4-4.500L4 7v3h6V5H7z"/><path fill-rule="evenodd" d="M23 14h8l7 24h2v4H29v-4h2l-1-4h-7l-1 4h2v4H12v-4h3zm3.500 6L24 30h5.500z"/></svg>
      <i class="ml-[23px] h-[62px] w-[2px] bg-[#d6d6d6]"></i>
      <div class="flex h-[62px] w-[309px] text-[23px] leading-[28px] tracking-[0px] text-[#7c7c7c]">
        <svg class="mt-[5px] ml-[13px] size-[18px]" viewBox="0 0 18 18"><rect width="18" height="18" rx="3" fill="#7c7c7c"/><path d="M4 9l4 4 7-8" fill="none" stroke="#eee" stroke-width="2.500"/></svg>
        <div class="ml-[20px] w-[94px] pt-[1px] text-right">1<br>0</div>
        <i class="ml-[8px] h-[42px] w-[2px] self-center bg-[#dcdcdc]"></i>
        <svg class="mt-[6px] ml-[9px] h-[18px] w-[25px]" viewBox="0 0 25 18" fill="none" stroke="#7c7c7c"><path d="M1 9Q7 2 14 2M1 9q3 5 8 7M17 3q5 2 7 6-4 6-12 7" stroke-width="2"/><path d="M17 0 8 18M14 4Q8 5 9 10" stroke-width="2"/></svg>
        <div class="w-[106px] pt-[1px] text-right">0<br>3</div>
      </div>
      <i class="-ml-[2px] h-[62px] w-[2px] bg-[#d6d6d6]"></i>
      <span class="ml-[12px] flex h-[62px] w-[64px] items-center justify-center border-2 border-[#aaa] bg-[#cbcbcb]"><svg class="size-[36px]" viewBox="0 0 36 36"><circle cx="18" cy="18" r="13" fill="none" stroke="#000" stroke-width="4"/><path d="M18 0v12M18 24v12M0 18h12M24 18h12" stroke="#000" stroke-width="4"/></svg></span>
    </div>
    <div class="h-[10px] shrink-0 bg-[#d3d3d3]"></div>

    <!-- Results panel header -->
    <div class="flex h-[46px] shrink-0 items-center border-b-2 border-[#d3d3d3]">
      <i class="mt-[6px] h-[8px] w-[12px] bg-[#3c3c3c]"></i>
      <span class="ml-[8px] w-[220px] pb-[1px] text-[22px] tracking-[0.65px]">ClueGO+CluePedia</span>
      <svg class="h-[11px] w-[13px]" viewBox="0 0 13 11"><path d="M0 0h13L6.500 11z"/></svg>
      <i class="mt-[6px] ml-[11px] h-[8px] w-[982px] bg-[#3c3c3c]"></i>
      <svg class="ml-[6px] h-[20px] w-[23px]"><use href="#maxi"/></svg>
      <i class="mt-[6px] ml-[3px] h-[8px] w-[12px] bg-[#3c3c3c]"></i>
      <svg class="ml-[7px] size-[22px]"><use href="#pin"/></svg>
      <i class="mt-[6px] ml-[3px] h-[8px] w-[12px] bg-[#3c3c3c]"></i>
      <i class="mt-[11px] ml-[6px] h-[6px] w-[23px] rounded-[3px] bg-black"></i>
      <i class="mt-[6px] ml-[3px] h-[8px] w-[12px] bg-[#3c3c3c]"></i>
    </div>

    <!-- Results tabs -->
    <div class="h-[648px] shrink-0 border-b-2 border-[#d3d3d3] bg-white pt-[52px] pl-[16px]">
      <div class="flex h-[574px] w-[1346px] flex-col items-center rounded-[10px] border-2 border-[#e6e6e6] bg-[#f4f4f4]">
        <div class="-mt-[28px] flex h-[40px] shrink-0 items-center text-center leading-[36px] tracking-[0.4px]">
          <span class="h-[40px] w-[242px] rounded-l-[8px] border-2 border-[#cfcfcf] bg-white">Results for Analysis8</span>
          <span class="h-[40px] w-[249px] border-y-2 border-[#cfcfcf] bg-white">Results for Analysis9</span>
          <span class="h-[40px] w-[255px] rounded-r-[8px] bg-linear-to-b from-[#6aa4fb] to-[#0366fe] pt-[2px] text-white">Results for Analysis10</span>
        </div>
        <div class="mt-[47px] flex h-[488px] w-[1304px] flex-col items-center rounded-[8px] border-2 border-[#e0e0e0] bg-[#eaeaea]">
          <div class="-mt-[26px] ml-[2px] flex h-[40px] shrink-0 text-center leading-[36px] tracking-[0.38px]">
            <span class="h-[40px] w-[309px] rounded-l-[8px] bg-linear-to-b from-[#6aa4fb] to-[#0366fe] pt-[2px] text-white">ClueGO Results (Cluster #1)</span>
            <span class="h-[40px] w-[147px] border-y-2 border-r-2 border-[#cfcfcf] bg-white">Cluster #1</span>
            <span class="h-[40px] w-[160px] border-y-2 border-r-2 border-[#cfcfcf] bg-white">ClueGO Log</span>
            <span class="flex h-[40px] w-[187px] items-center justify-center gap-[10px] rounded-r-[8px] border-y-2 border-r-2 border-[#cfcfcf] bg-white"><svg class="size-[32px]" viewBox="0 0 32 32" fill="none" stroke-width="2.500"><path d="M16 16 8 3M16 16 2 13M5 8l4-2" stroke="#d22"/><path d="M16 16 23 3M16 16 28 11M26 7l3 3" stroke="#c98a1b"/><path d="M16 16 6 26M16 16 14 31M6 20v7" stroke="#33c"/><path d="M16 16 30 19M16 16 25 28M22 27l7-3" stroke="#2a9a3a"/><g fill="#d22"><circle cx="8" cy="4" r="2.500"/><circle cx="3" cy="13" r="2.500"/></g><g fill="#33c"><circle cx="6" cy="26" r="2.500"/><circle cx="14" cy="29" r="2.500"/></g><circle cx="16" cy="16" r="4" fill="#744"/></svg>CluePedia</span>
          </div>
          <div class="mt-[18px] ml-[3px] flex h-[80px] w-[1294px] shrink-0 items-center bg-white">
            <i class="ml-[8px] h-[68px] w-[8px] border-x-2 border-[#999]"></i>
            <div class="ml-[22px] flex w-[42px] flex-col items-center text-[13px] font-bold leading-[11px] tracking-[-0.4px]"><span>Hide</span><svg class="size-[24px]"><use href="#balls"/></svg><span>Labels</span></div>
            <svg class="ml-[22px] h-[46px] w-[42px]" viewBox="0 0 42 46" fill="none"><use href="#balls" x="3" y="5" width="36" height="36"/><path d="M8 10Q20-4 34 9M34 36Q22 50 8 37" stroke="url(#gMag)" stroke-width="5"/><path d="M38 4v12H26zM4 42V30h12z" fill="url(#gMag)"/></svg>
            <svg class="ml-[24px] h-[46px] w-[48px]" viewBox="0 0 48 46" fill="none"><path d="M10 14Q22-4 36 10M38 32Q26 50 12 36" stroke="url(#gMag)" stroke-width="5"/><path d="M40 4v12H28zM8 42V30h12z" fill="url(#gMag)"/><text x="24" y="30" text-anchor="middle" class="fill-[#ff5050] text-[18px] tracking-[-0.2px]">Label</text></svg>
            <svg class="ml-[62px] h-[44px] w-[48px]" viewBox="0 0 48 44"><use href="#balls" x="12" y="6" width="36" height="36"/><path d="M0 14 16 0v9l14 5v6l-14-2v8z" fill="url(#gMag)" stroke="#90528c"/></svg>
            <svg class="ml-[30px] h-[46px] w-[60px]" viewBox="0 0 60 46"><path d="M28 0h22l9 9v34H28z" fill="#f4f4f4" stroke="#bbb"/><path d="M31 13h26v24H31z" fill="#333"/><path d="M31 18h26M31 24h26M31 30h26M38 13v24M45 13v24M51 13v24" stroke="#fff" stroke-width="1.500"/><use href="#balls" x="0" y="1" width="34" height="34"/><path d="M14 24q8 4 10 3v-7l11 12-11 14v-9q-10 0-10-13z" fill="url(#gMag)"/></svg>
            <svg class="ml-[28px] h-[46px] w-[60px]" viewBox="0 0 60 46"><path d="M28 0h22l9 9v34H28z" fill="#f4f4f4" stroke="#bbb"/><path d="M31 10h26v18H31z" fill="#333"/><path d="M31 15h26M31 20h26M38 10v18M45 10v18M51 10v18" stroke="#fff" stroke-width="1.500"/><use href="#balls" x="0" y="1" width="34" height="34"/><rect x="38" y="24" width="19" height="17" fill="#fff" stroke="#1d6a1d" stroke-width="2.500"/><path d="M42 27l11 11M53 27 42 38" stroke="#1d7a1d" stroke-width="3"/><path d="M14 24q8 4 10 3v-7l11 12-11 14v-9q-10 0-10-13z" fill="url(#gMag)"/></svg>
            <svg class="ml-[72px] h-[44px] w-[38px]" viewBox="0 0 38 44"><path d="M0 6h26M10 6V1h7v5" stroke="#333" stroke-width="4" fill="none"/><path d="M2 10h22v23H2z" fill="#444"/><path d="M7 13v17M13 13v17M19 13v17" stroke="#ddd" stroke-width="2"/><use href="#balls" x="13" y="18" width="24" height="24"/></svg>
            <svg class="ml-[58px] size-[40px]"><use href="#helpB"/></svg>
          </div>
          <div class="ml-[3px] flex h-[368px] w-[1294px] shrink-0 border-2 border-[#858585] border-t-[#555] bg-[#d6d6d6] p-[4px] tracking-[0.36px]">
            <div class="w-[642px] shrink-0 bg-white">
              <div class="grid h-[36px] grid-cols-[39px_101px_1fr] items-center border-b-2 border-[#d3d3d3] bg-[#efefef]">
                <span class="h-[26px] border-r-2 border-[#d0d0d0]"></span>
                <span class="h-[26px] border-r-2 border-[#d0d0d0] pl-[8px] leading-[26px]">ID</span>
                <span class="pl-[8px] leading-[26px]">Term</span>
              </div>
              <div id="terms" class="ml-[1px] h-[292px] w-[640px] overflow-hidden border-t-[3px] border-l-2 border-[#858585]"></div>
              <div class="h-[28px] border-t-2 border-[#e8e8e8] bg-[#fafafa] pt-[6px] pl-[1px]"><i class="block h-[16px] w-[95px] rounded-full bg-[#c1c1c1]"></i></div>
            </div>
            <div class="ml-[8px] w-[602px] shrink-0 bg-white">
              <div class="grid h-[36px] grid-cols-[40px_266px_42px_30px_200px_24px] items-center overflow-hidden border-b-2 border-[#d3d3d3] bg-[#efefef]">
                <span class="h-[26px] border-r-2 border-[#d0d0d0]"></span>
                <span class="h-[26px] border-r-2 border-[#d0d0d0] pl-[7px] leading-[26px]">Selection</span>
                <span class="h-[26px] border-r-2 border-[#d0d0d0] pl-[8px] leading-[26px]">...</span>
                <span class="h-[26px] border-r-2 border-[#d0d0d0] pl-[8px] leading-[26px]">...</span>
                <span class="h-[26px] border-r-2 border-[#d0d0d0] pl-[8px] leading-[26px]">Symbol Name</span>
                <span class="pl-[8px] leading-[26px]">In</span>
              </div>
              <div id="symbols" class="ml-[1px] h-[292px] w-[598px] overflow-hidden border-t-[3px] border-l-2 border-[#858585]"></div>
              <div class="h-[28px] border-t-2 border-[#e8e8e8] bg-[#fafafa] pt-[6px] pl-[1px]"><i class="block h-[16px] w-[265px] rounded-full bg-[#c1c1c1]"></i></div>
            </div>
            <div class="w-[30px] bg-white pt-[36px]"><div class="h-[292px] border-l-2 border-[#eee] bg-[#fafafa] pt-[2px] pl-[6px]"><i class="block h-[92px] w-[16px] rounded-full bg-[#c1c1c1]"></i></div></div>
          </div>
        </div>
      </div>
    </div>
  </section>
</div>

<!-- Bottom tab bar -->
<div class="flex h-[60px] shrink-0 items-center border-b-2 border-[#d3d3d3] pt-[2px] text-[26px] leading-[30px] tracking-[0.45px] text-[#444]">
  <svg class="ml-[131px] size-[28px]" viewBox="0 0 28 26"><rect width="28" height="26" rx="2" fill="#3c3c3c"/><path d="M4 6l5 4.500L4 15M11 17h8" fill="none" stroke="#fff" stroke-width="2.500"/></svg>
  <span class="ml-[11px] w-[1722px]">Command Line</span>
  <svg class="h-[27px] w-[26px] fill-[#3c3c3c]"><use href="#tbl"/><circle cx="20" cy="20" r="7"/></svg>
  <span class="ml-[12px] w-[185px]">Node Table</span>
  <svg class="h-[27px] w-[26px] fill-[#3c3c3c]"><use href="#tbl"/><path d="M14 25 24 15" stroke="#3c3c3c" stroke-width="3"/><circle cx="14.500" cy="24.500" r="2.500"/><circle cx="23" cy="15" r="2.500"/></svg>
  <span class="ml-[11px] w-[179px]">Edge Table</span>
  <svg class="h-[27px] w-[26px] fill-[#3c3c3c] text-[#3c3c3c]"><use href="#tbl"/><use href="#share" x="11" y="11" width="15" height="16"/></svg>
  <span class="ml-[11px] w-[202px]">Network Table</span>
  <div class="flex h-[48px] w-[308px] items-center bg-[#cdcdcd] pl-[17px] text-black">
    <span class="flex size-[31px] items-center justify-center rounded-[5px] bg-[#994fa5] text-[17px] font-bold tracking-[0px] text-white">CG</span>
    <span class="ml-[9px] tracking-[0.4px]">ClueGO+CluePedia</span>
  </div>
</div>

<!-- Status bar -->
<footer class="relative flex h-[60px] shrink-0 items-center pt-[8px]">
  <div class="absolute bottom-0 left-[900px] h-[50px] w-[1080px] bg-linear-to-b from-[#eeeeee] to-[#dcdcdc] [mask-image:linear-gradient(to_right,transparent,#000_9%,#000_91%,transparent)]"></div>
  <span class="ml-[18px] flex h-[48px] w-[80px] items-center justify-center border-2 border-[#b5b5b5] bg-[#f6f6f6]"><svg class="h-[22px] w-[30px]" viewBox="0 0 30 22"><path d="M7 22a7 7 0 0 1-2-13Q5 0 13 0q5 0 7 5 5 0 5 5 5 2 5 6 0 6-6 6z"/></svg></span>
  <span class="ml-[28px] flex h-[48px] w-[80px] items-center justify-center border-2 border-[#b5b5b5] bg-[#f6f6f6]"><svg class="h-[22px] w-[28px]" viewBox="0 0 28 22"><path d="M8 1h20v4H8zM8 9h20v4H8zM8 17h20v4H8z"/><circle cx="3" cy="3" r="2.700"/><circle cx="3" cy="11" r="2.700"/><circle cx="3" cy="19" r="2.700"/></svg></span>
  <span class="ml-auto mr-[20px] flex h-[48px] w-[56px] items-center justify-center border-2 border-[#b5b5b5] bg-[#f6f6f6]"><svg class="h-[26px] w-[24px]" viewBox="0 0 24 26"><rect x="4" width="16" height="26" rx="1.500" fill="#0a8d38"/><path d="M1.500 3v21M22.500 3v21" stroke="#0a8d38" stroke-width="3" stroke-dasharray="2.500 2"/></svg></span>
</footer>

<script>
  const box = on => on
    ? '<svg class="size-[28px] shrink-0 rounded-[7px] bg-[#3b87fb]"><use href="#check"/></svg>'
    : '<i class="size-[28px] shrink-0 rounded-[7px] border-2 border-[#c4c4c4] bg-white"></i>';

  const ontologies = [
    ['GO', 'CellularComponent–EBI–UniProt...', '2...'],
    ['Chromosoma...', 'Chromosomal–Location', '2...'],
    ['CORUM', 'CORUM–3.0–FunCat–MIPS', '0...'],
    ['GO', 'ImmuneSystemProcess–EBI–Uni...', '2...'],
    ['KEGG', 'KEGG', '2...'],
    ['GO', 'MolecularFunction–EBI–UniProt–...', '2...', true],
    ['', '', '']
  ];
  document.getElementById('ontologies').innerHTML = '<div class="-mt-[4px]">' + ontologies.map(([type, name, n, on]) =>
    `<div class="${on ? 'bg-[#3a698b] text-white' : ''} mb-[2px] grid h-[30px] grid-cols-[50px_152px_334px_30px_40px_40px] leading-[30px]">
      <span class="flex items-center border-r-2 border-white pt-[1px] pl-[14px]">${box(on)}</span>
      <span class="border-r-2 border-white">${type}</span>
      <span class="border-r-2 border-white">${name}</span>
      <span class="border-r-2 border-white">${name && '...'}</span>
      <span class="border-r-2 border-white">${n}</span>
      <span class="flex"><i class="ml-[8px] h-[30px] w-[13px] rounded-l-[5px] border-l-2 border-[#d0d0d0] bg-white"></i><svg class="h-[30px] w-[11px] bg-linear-to-b from-[#6aa4fb] to-[#0366fe]" viewBox="0 0 11 30"><path d="M3.500 10 5.500 4l2 6M3.500 18l2 6 2-6" fill="none" stroke="#fff" stroke-width="1.300"/></svg></span>
    </div>`).join('') + '</div>';

  const evidence = [
    ['IBA (Inferred from Biological Aspect of Ancestor)'],
    ['IBD (Inferred from Biological Aspect of Descen...'],
    ['IC (Inferred by Curator)'],
    ['IDA (Inferred from Direct Assay)', true],
    ['IEA (Inferred from Electronic Annotation)'],
    ['IEP (Inferred from Expression Pattern)', true, true],
    ['IGC (Inferred from Genomic Context)']
  ];
  document.getElementById('evidence').innerHTML = '<div class="-mt-[10px]">' + evidence.map(([text, on, sel]) =>
    `<div class="${sel ? 'bg-[#3a698b] tracking-[0.2px] text-white' : ''} mb-[2px] grid h-[30px] w-[520px] grid-cols-[50px_470px] leading-[30px]">
      <span class="flex items-center border-r-2 border-white pl-[14px]">${box(on)}</span>
      <span class="pl-[1px]">${text}</span>
    </div>`).join('') + '</div>';

  const terms = [
    ['GO:000...', 'opsonin binding', 1], ['GO:000...', 'complement binding', 1],
    ['GO:005...', 'low–density lipoprotein particle receptor binding', 1],
    ['GO:004...', 'positive regulation of bone resorption'], ['GO:005...', 'cytolysis by host of symbiont cells'],
    ['GO:009...', 'vitamin transmembrane transporter activity'], ['GO:009...', 'structural constituent of postsynapse']
  ];
  document.getElementById('terms').innerHTML = '<div class="pt-[1px]">' + terms.map(([id, term, green]) =>
    `<div class="mb-[2px] flex h-[30px] leading-[30px]">
      <svg class="mt-[2px] ml-[14px] h-[28px] w-[24px] rounded-l-[7px] bg-[#3b87fb]"><use href="#check" width="28" height="28"/></svg>
      <span class="ml-[4px] w-[99px] tracking-[0.3px]">${id}</span>
      <span class="${green ? 'bg-[#779e62]' : 'bg-[#c0c0c0]'} w-[495px]">${term}</span>
    </div>`).join('') + '</div>';

  const symbols = [['p', 'PRAP1', 'P'], ['n', 'ADH4', 'A'], ['p', 'COMP', 'C'], ['p', 'CRP', 'C'], ['n', 'GC', 'G'],
    ['p', 'HBA1', 'H'], ['p', 'CFHR1', 'C'], ['p', 'CFHR2', 'C'], ['n', 'HSPG2', 'H']];
  document.getElementById('symbols').innerHTML = '<div class="pt-[1px]">' + symbols.map(([r, s, i]) =>
    `<div class="mb-[2px] flex h-[30px] leading-[30px]">
      <svg class="ml-[5px] size-[28px] shrink-0 rounded-[7px] bg-[#3b87fb]"><use href="#check"/></svg>
      <span class="ml-[10px] w-[266px] shrink-0">Cluster #1: Functionally ...</span>
      <span class="w-[43px] shrink-0">${r}...</span><span class="w-[29px] shrink-0">...</span>
      <span class="w-[200px] shrink-0 tracking-[0.1px]">${s}</span><span>${i}</span>
    </div>`).join('') + '</div>';
</script>
</body>
</html>
